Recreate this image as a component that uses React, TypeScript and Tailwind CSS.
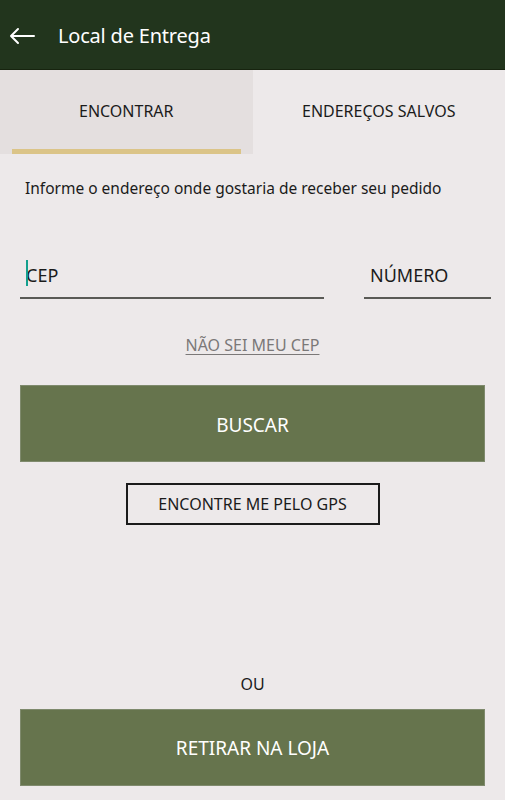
import { useState } from "react";

const FONT = { fontFamily: '"Noto Sans", "Open Sans", sans-serif' };

export default function App() {
  const [tab, setTab] = useState(0);

  return (
    <div className="w-[505px] h-[800px] bg-[#ede9ea] flex flex-col" style={FONT}>
      {/* Header */}
      <header className="h-[70px] bg-[#22351d] border-b border-[#17240f] flex items-center pl-[9px] pt-[3px]">
        <svg width="26" height="18" viewBox="0 0 26 18" fill="none" stroke="#fff" strokeWidth="2" strokeLinecap="round" strokeLinejoin="round">
          <path d="M25 9H2M9 2L2 9l7 7" />
        </svg>
        <h1 className="ml-[23px] text-white text-[20px] tracking-[-0.2px]">Local de Entrega</h1>
      </header>

      {/* Tabs */}
      <div className="flex h-[84px]">
        {["ENCONTRAR", "ENDEREÇOS SALVOS"].map((label, i) => (
          <button
            key={label}
            onClick={() => setTab(i)}
            className={`flex-1 flex flex-col ${tab === i ? "bg-[#e4dfdf]" : "bg-[#ede9ea]"}`}
          >
            <span className="flex-1 flex items-center justify-center pt-[3px] text-[16px] text-[#1b1b1b]">{label}</span>
            <span className={`h-[5px] mx-[12px] ${tab === i ? "bg-[#dbc488]" : ""}`} />
          </button>
        ))}
      </div>

      <div className="px-[20px] flex flex-col">
        <p className="mt-[23px] pl-[5px] text-[15.5px] text-[#1b1b1b]">
          Informe o endereço onde gostaria de receber seu pedido
        </p>

        {/* Inputs */}
        <div className="flex gap-[40px] mt-[55px] -mr-[6px]">
          <div className="w-[304px] border-b-2 border-[#5a5a56] h-[44px] flex items-center relative">
            <span className="absolute left-[6px] top-[5px] w-[2px] h-[26px] bg-[#14a08e]" />
            <span className="pl-[6px] text-[18px] text-[#1b1b1b] -mt-[1px]">CEP</span>
          </div>
          <div className="flex-1 border-b-2 border-[#5a5a56] h-[44px] flex items-center">
            <span className="pl-[6px] text-[18px] text-[#1b1b1b] -mt-[1px]">NÚMERO</span>
          </div>
        </div>

        <a className="self-center mt-[34px] text-[16px] text-[#7b7878] underline underline-offset-[3px]">
          NÃO SEI MEU CEP
        </a>

        <button className="mt-[28px] h-[77px] bg-[#66744d] border border-[#7f8a6d] text-white text-[19px] pt-[2px]">
          BUSCAR
        </button>

        <button className="self-center mt-[21px] w-[254px] h-[42px] border-2 border-[#1b1b1b] text-[16px] text-[#1b1b1b]">
          ENCONTRE ME PELO GPS
        </button>

        <p className="mt-[147px] text-center text-[16px] text-[#1b1b1b]">OU</p>

        <button className="mt-[13px] h-[77px] bg-[#66744d] border border-[#7f8a6d] text-white text-[19px]">
          RETIRAR NA LOJA
        </button>
      </div>
    </div>
  );
}
